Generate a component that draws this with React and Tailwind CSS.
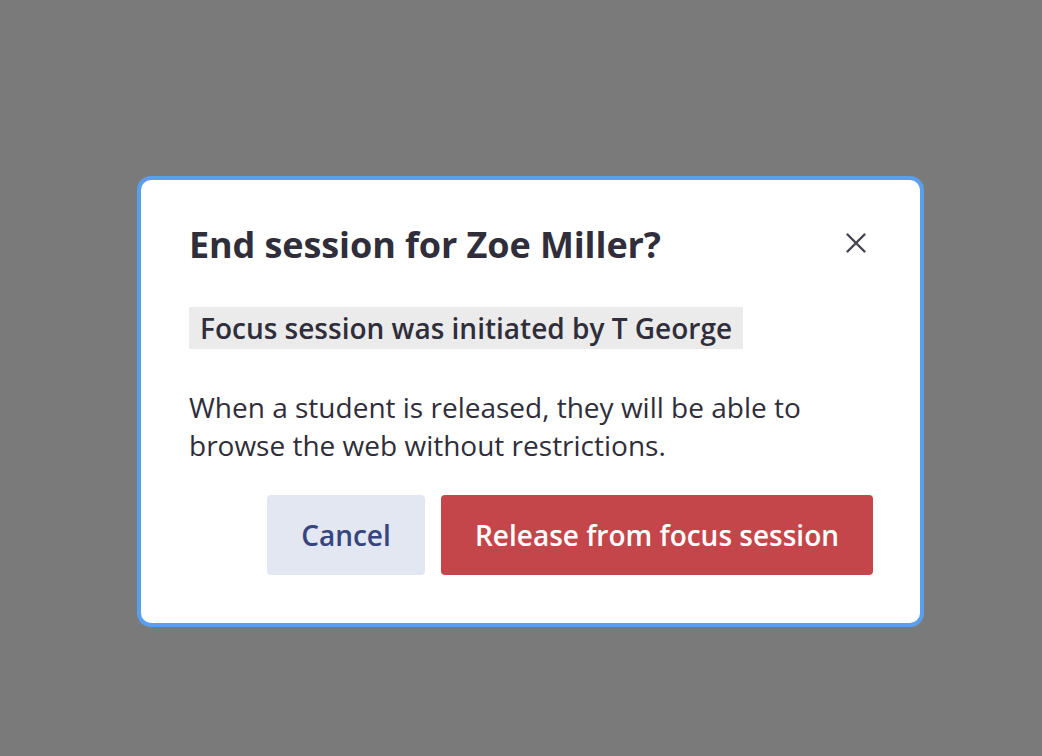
import React from "react";

function CloseIcon() {
  return (
    <svg width="20" height="20" viewBox="0 0 20 20" fill="none">
      <path d="M1.5 1.5L18.5 18.5M18.5 1.5L1.5 18.5" stroke="#45444f" strokeWidth="2.4" strokeLinecap="round" />
    </svg>
  );
}

export default function App() {
  return (
    <div
      className="min-h-screen w-full bg-[#7a7a7a] pt-[176px] pl-[137px]"
      style={{ fontFamily: '"Open Sans", "Noto Sans", sans-serif' }}
    >
      <div className="w-[787px] h-[451px] rounded-[14px] border-4 border-[#5a9feb] bg-white pl-[48px] pr-[47px] pt-[41px] text-[#2f2e3a]">
        <div className="flex items-start justify-between">
          <h1 className="text-[36px] font-bold leading-[48px] tracking-[-0.1px]">End session for Zoe Miller?</h1>
          <button className="mt-[12px] mr-[7px]">
            <CloseIcon />
          </button>
        </div>
        <div className="mt-[38px] inline-block bg-[#ebebeb] px-[11px] py-[4px] text-[28px] font-semibold leading-[34px]">
          Focus session was initiated by T George
        </div>
        <p className="mt-[39px] text-[28px] leading-[38px]">
          When a student is released, they will be able to
          <br />
          browse the web without restrictions.
        </p>
        <div className="mt-[31px] flex justify-end gap-[16px]">
          <button className="h-[80px] w-[158px] rounded-[4px] bg-[#e3e7f2] text-[28px] font-semibold text-[#36457f]">
            Cancel
          </button>
          <button className="h-[80px] w-[432px] rounded-[4px] bg-[#c5464a] text-[28px] font-semibold text-white">
            Release from focus session
          </button>
        </div>
      </div>
    </div>
  );
}
